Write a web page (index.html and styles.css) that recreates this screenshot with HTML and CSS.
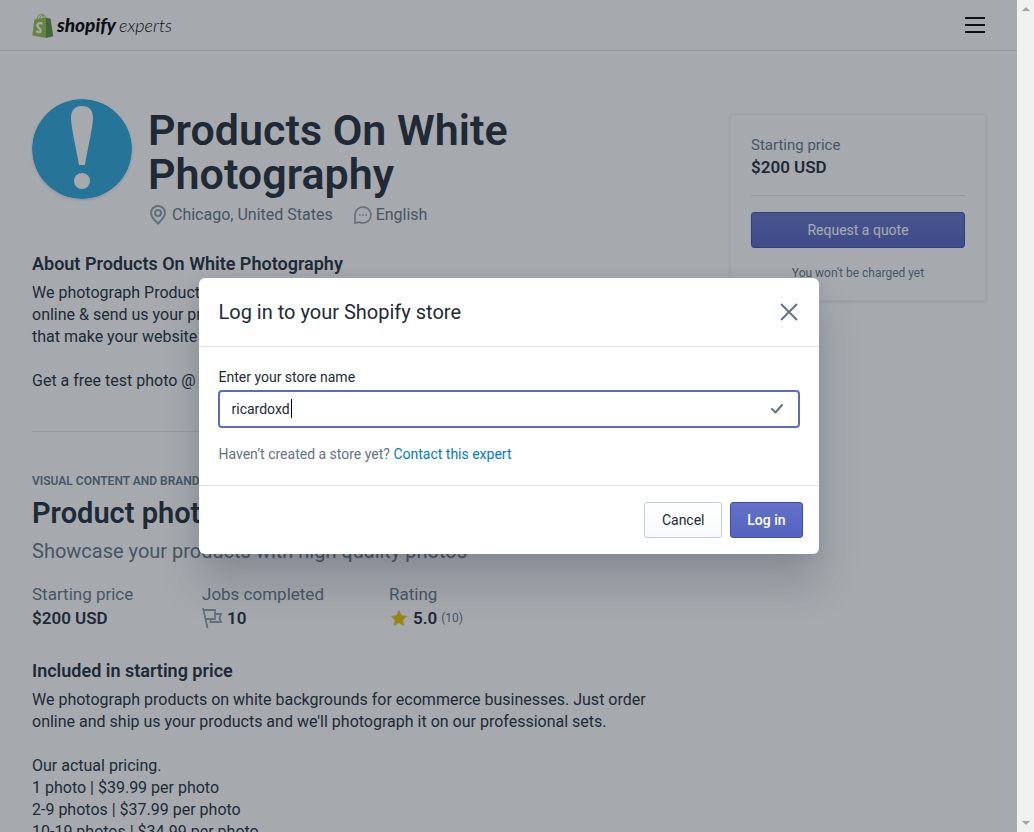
FILE: index.html
```html
<!DOCTYPE html>
<html lang="en">
<head>
<meta charset="utf-8">
<title>Products On White Photography - Shopify Experts</title>
<link rel="stylesheet" href="styles.css">
</head>
<body>
<div class="window">
  <div class="page">
    <header class="topbar">
      <a class="logo" href="#" aria-label="Shopify Experts">
        <svg class="logo-bag" viewBox="0 0 22 25" aria-hidden="true">
          <path d="M5 6C6 2.500 8 .9 9.500 1.300 11 1.800 11.300 4 11.200 5.800M7.500 5.500C8.500 2.500 10.500 1.500 12 2 13.200 2.500 13.300 4 13.200 5" fill="none" stroke="#95bf47" stroke-width="1"/>
          <path d="M2.400 6.600 14 4.500 14 25 .3 22.400Z" fill="#95bf47"/>
          <path d="M14 4.500 16.200 5.200 18.500 5.500 21.300 23.300 14 25Z" fill="#5e8e3e"/>
          <path d="M10.600 10.700C8 9.300 5.200 10.300 5.300 12.700 5.400 14.900 8.900 15.200 8.700 17.500 8.500 19.900 6 19.600 4.300 18.200" fill="none" stroke="#fff" stroke-width="2.300"/>
        </svg>
        <span class="logo-brand">shopify</span><span class="logo-sub">experts</span>
      </a>
      <button class="menu" type="button" aria-label="Menu">
        <svg width="20" height="16" viewBox="0 0 20 16"><path d="M0 1h20M0 8h20M0 15h20" stroke="#000" stroke-width="2"/></svg>
      </button>
    </header>

    <div class="columns">
      <main class="main">
        <section class="profile">
          <svg class="avatar" viewBox="0 0 100 100" aria-hidden="true">
            <circle cx="50" cy="50" r="50" fill="#2ba5d8"/>
            <path d="M39 19C39 11 43 7 50 7s11 4 11 12C61 28 55 53 53 66h-6C45 53 39 28 39 19Z" fill="#fff"/>
            <circle cx="50" cy="82" r="8" fill="#fff"/>
          </svg>
          <div>
            <h1 class="name">Products On White Photography</h1>
            <ul class="meta">
              <li class="meta-item meta-place">
                <svg width="18" height="20" viewBox="0 0 18 20" fill="none" stroke="#919eab" stroke-width="2"><path d="M9 18.500C6.500 16 2 12.500 2 8a7 7 0 0 1 14 0c0 4.500-4.500 8-7 10.500Z"/><circle cx="9" cy="8" r="3"/></svg>
                Chicago, United States
              </li>
              <li class="meta-item">
                <svg width="20" height="20" viewBox="0 0 20 20"><path d="M2 18V10a8 8 0 1 1 4.500 7.200Z" fill="none" stroke="#919eab" stroke-width="1.600"/><path d="M6 9.200h1.600v1.600H6zM9.200 9.200h1.600v1.600H9.200zM12.400 9.200H14v1.600h-1.600z" fill="#919eab"/></svg>
                English
              </li>
            </ul>
          </div>
        </section>

        <section class="about">
          <h2 class="heading">About Products On White Photography</h2>
          <p class="copy">We photograph Products On White Backgrounds. Simply order<br>online &amp; send us your products and we'll create images<br>that make your website look professional.</p>
          <p class="copy copy-next">Get a free test photo @ our website</p>
        </section>

        <section class="service">
          <p class="category">Visual content and branding</p>
          <h2 class="service-title">Product photography</h2>
          <p class="tagline">Showcase your products with high quality photos</p>
          <dl class="stats">
            <div class="stat">
              <dt>Starting price</dt>
              <dd>$200 USD</dd>
            </div>
            <div class="stat">
              <dt>Jobs completed</dt>
              <dd><svg width="21" height="20" viewBox="0 0 21 20" fill="none" stroke="#919eab" stroke-width="1.800"><path d="M1 0l4.500 20M1.500 2H13v9H4M13 6h6l-1.500 4 1.500 4H8.500v-3"/></svg>10</dd>
            </div>
            <div class="stat">
              <dt>Rating</dt>
              <dd><svg width="20" height="18" viewBox="-1 0 20 18"><path d="M9 1l2.600 5.200 5.600.7-4.100 4 1 6L9 14l-5.100 2.900 1-6-4.100-4 5.600-.7Z" fill="#eec200"/></svg>5.0<span class="count">(10)</span></dd>
            </div>
          </dl>
          <h3 class="heading">Included in starting price</h3>
          <p class="copy">We photograph products on white backgrounds for ecommerce businesses. Just order online and ship us your products and we'll photograph it on our professional sets.</p>
          <p class="copy copy-next">Our actual pricing.<br>1 photo | $39.99 per photo<br>2-9 photos | $37.99 per photo<br>10-19 photos | $34.99 per photo</p>
        </section>
      </main>

      <aside class="quote">
        <p class="quote-label">Starting price</p>
        <p class="quote-price">$200 USD</p>
        <button class="button button-primary" type="button">Request a quote</button>
        <p class="quote-note">You won't be charged yet</p>
      </aside>
    </div>

    <div class="backdrop">
      <form class="modal" role="dialog" aria-labelledby="modal-title">
        <div class="modal-head">
          <h2 class="modal-title" id="modal-title">Log in to your Shopify store</h2>
          <button class="close" type="button" aria-label="Close">
            <svg width="18" height="18" viewBox="0 0 18 18"><path d="M1 1l16 16M17 1L1 17" stroke="#637381" stroke-width="2"/></svg>
          </button>
        </div>
        <div class="modal-body">
          <label class="label" for="store">Enter your store name</label>
          <div class="field">
            <input class="input" id="store" type="text" value="ricardoxd">
            <span class="caret"></span>
            <svg class="tick" width="12" height="10" viewBox="0 0 12 10"><path d="M1 5l3.500 3.500L11 1" fill="none" stroke="#637381" stroke-width="2" stroke-linecap="round" stroke-linejoin="round"/></svg>
          </div>
          <p class="help">Haven’t created a store yet? <a href="#">Contact this expert</a></p>
        </div>
        <div class="modal-foot">
          <button class="button button-plain" type="button">Cancel</button>
          <button class="button button-primary" type="submit">Log in</button>
        </div>
      </form>
    </div>
  </div>
  <div class="scrollbar" aria-hidden="true">
    <span class="arrow-up"></span>
    <span class="arrow-down"></span>
  </div>
</div>
</body>
</html>
```

FILE: styles.css
```css
* {
  box-sizing: border-box;
  margin: 0;
}

body {
  font-family: Roboto, "Liberation Sans", sans-serif;
  font-size: 16px;
  line-height: 22px;
  color: #212b36;
}

button,
input {
  font: inherit;
}

.window {
  display: grid;
  grid-template-columns: 1fr 17px;
  height: 100vh;
}

.page {
  position: relative;
  overflow: hidden;
  background: #fff;
}

.topbar {
  display: flex;
  align-items: center;
  justify-content: space-between;
  height: 51px;
  padding: 0 32px;
  border-bottom: 1px solid #dfe3e8;
}

.logo {
  display: flex;
  align-items: center;
  color: #000;
  font-family: Lato, sans-serif;
  font-size: 18px;
  font-style: italic;
  text-decoration: none;
}

.logo-bag {
  width: 22px;
  height: 25px;
  margin-right: 3px;
}

.logo-brand {
  font-size: 19px;
  font-weight: 900;
}

.logo-sub {
  margin-left: 3px;
  font-weight: 300;
}

.menu,
.close {
  display: flex;
  padding: 0;
  border: 0;
  background: none;
}

.columns {
  display: grid;
  grid-template-columns: 1fr 256px;
  gap: 48px;
  align-items: start;
  padding: 48px 31px 0 32px;
}

.profile {
  display: flex;
  gap: 16px;
}

.avatar {
  flex: none;
  width: 100px;
  height: 100px;
  border-radius: 50%;
  box-shadow: 0 1px 3px rgba(33, 43, 54, 0.2);
}

.name {
  max-width: 400px;
  padding-top: 9px;
  font-size: 43px;
  font-weight: 600;
  line-height: 44px;
}

.meta {
  display: flex;
  gap: 20px;
  margin-top: 8px;
  padding: 0 0 0 1px;
  list-style: none;
  color: #637381;
}

.meta-item {
  display: flex;
  align-items: center;
  gap: 3px;
}

.meta-place {
  gap: 5px;
}

.about {
  margin-top: 26px;
  padding-bottom: 39px;
  border-bottom: 1px solid #dfe3e8;
}

.heading {
  font-size: 18px;
  font-weight: 600;
  line-height: 24px;
}

.copy {
  margin-top: 6px;
}

.copy-next {
  margin-top: 22px;
}

.service {
  padding-top: 41px;
}

.category {
  font-size: 12px;
  font-weight: 600;
  line-height: 16px;
  text-transform: uppercase;
  color: #637381;
}

.service-title {
  margin-top: 8px;
  font-size: 29px;
  font-weight: 600;
  line-height: 32px;
}

.tagline {
  margin-top: 8px;
  font-size: 20px;
  line-height: 28px;
  color: #637381;
}

.stats {
  display: grid;
  grid-template-columns: 170px 187px auto;
  margin: 17px 0 29px;
  line-height: 24px;
}

.stat dt {
  color: #637381;
  font-size: 17px;
}

.stat dd {
  display: flex;
  align-items: center;
  gap: 4px;
  margin: 0;
  font-size: 17px;
  font-weight: 600;
}

.count {
  font-size: 12px;
  font-weight: 400;
  color: #637381;
}

.quote {
  display: flex;
  flex-direction: column;
  margin-top: 15px;
  padding: 19px 20px 16px;
  border: 1px solid rgba(63, 63, 68, 0.05);
  border-radius: 3px;
  box-shadow: 0 1px 3px rgba(63, 63, 68, 0.15);
}

.quote-label {
  font-size: 15px;
  color: #637381;
}

.quote-price {
  margin-bottom: 16px;
  padding-bottom: 17px;
  border-bottom: 1px solid #dfe3e8;
  font-size: 17px;
  font-weight: 600;
}

.quote-note {
  margin-top: 14px;
  font-size: 12px;
  text-align: center;
  color: #637381;
}

.button {
  height: 36px;
  padding: 0 16px;
  border-radius: 3px;
  font-size: 14px;
  line-height: 20px;
}

.button-primary {
  border: 1px solid #3f4eae;
  background: linear-gradient(#6371c7, #5563c1);
  color: #fff;
}

.modal-foot .button-primary {
  font-weight: 500;
}

.button-plain {
  min-width: 78px;
  border: 1px solid #c4cdd5;
  background: linear-gradient(#fff, #f9fafb);
  color: #212b36;
}

.backdrop {
  position: absolute;
  inset: 0;
  display: flex;
  align-items: center;
  justify-content: center;
  background: rgba(33, 43, 54, 0.4);
}

.modal {
  width: 620px;
  max-width: 100%;
  border-radius: 6px;
  background: #fff;
  box-shadow: 0 31px 41px rgba(32, 42, 53, 0.2), 0 2px 16px rgba(32, 42, 54, 0.08);
  font-size: 14px;
}

.modal-head {
  display: flex;
  align-items: center;
  justify-content: space-between;
  padding: 20px 21px 20px 20px;
  border-bottom: 1px solid #dfe3e8;
}

.modal-title {
  font-size: 20px;
  font-weight: 400;
  line-height: 28px;
}

.modal-body {
  padding: 20px;
}

.label {
  display: block;
  margin-bottom: 4px;
  line-height: 20px;
}

.field {
  position: relative;
}

.input {
  display: block;
  width: 100%;
  height: 36px;
  padding: 0 48px 0 12px;
  border: 1px solid #5c6ac4;
  border-radius: 3px;
  outline: 0;
  box-shadow: 0 0 0 1px #5c6ac4;
  color: #212b36;
}

.caret {
  position: absolute;
  top: 8px;
  left: 72px;
  width: 1px;
  height: 19px;
  background: #000;
}

.tick {
  position: absolute;
  top: 13px;
  right: 16px;
}

.help {
  margin-top: 16px;
  color: #637381;
}

.help a {
  color: #007ace;
  text-decoration: none;
}

.modal-foot {
  display: flex;
  justify-content: flex-end;
  gap: 8px;
  padding: 16px;
  border-top: 1px solid #dfe3e8;
}

.scrollbar {
  display: flex;
  flex-direction: column;
  align-items: center;
  justify-content: space-between;
  padding: 7px 0;
  background: #f0f0f0;
}

.arrow-up,
.arrow-down {
  border: 4px solid transparent;
}

.arrow-up {
  border-top: 0;
  border-bottom-color: #a3a3a3;
}

.arrow-down {
  border-bottom: 0;
  border-top-color: #a3a3a3;
}
```
